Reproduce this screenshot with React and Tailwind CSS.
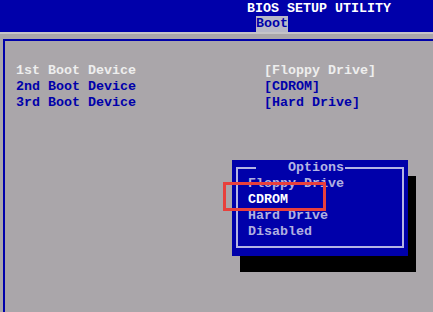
import React from "react";

const rows = [
  { label: "1st Boot Device", value: "[Floppy Drive]", active: true },
  { label: "2nd Boot Device", value: "[CDROM]" },
  { label: "3rd Boot Device", value: "[Hard Drive]" },
];

const options = ["Floppy Drive", "CDROM", "Hard Drive", "Disabled"];

const App = () => {
  return (
    <div
      className="relative w-[433px] h-[312px] overflow-hidden bg-[#aaa6aa] font-bold text-[13.33px] leading-[16px]"
      style={{ fontFamily: '"Liberation Mono", "DejaVu Sans Mono", monospace' }}
    >
      {/* header */}
      <div className="h-[32px] bg-[#0000aa] pl-[247px]">
        <div className="h-[16px] pt-[1px] text-white">BIOS SETUP UTILITY</div>
        <div className="h-[16px] pl-[9px]">
          <span className="inline-block bg-[#b8b8c8] text-[#0000aa] h-[16px]">Boot</span>
        </div>
      </div>
      <div className="h-[2px] bg-[#c6c4c8]" />

      {/* main frame */}
      <div className="ml-[3px] mt-[5px] h-[400px] border-l-2 border-t-2 border-[#0000aa] pt-[22px] pl-[11px]">
        {rows.map((r) => (
          <div
            key={r.label}
            className={`grid grid-cols-[248px_1fr] h-[16px] ${
              r.active ? "text-[#eeeeee]" : "text-[#0000aa]"
            }`}
          >
            <span>{r.label}</span>
            <span>{r.value}</span>
          </div>
        ))}
      </div>

      {/* options popup */}
      <div className="absolute left-[232px] top-[160px] w-[176px] h-[96px] bg-[#0000aa] shadow-[8px_16px_0_#000]">
        <div className="absolute left-[4px] right-[4px] top-[7px] bottom-[8px] border-2 border-[#b4b4e4]" />
        <div className="relative flex flex-col">
          <div className="h-[16px] pl-[24px]">
            <span className="inline-block h-[16px] bg-[#0000aa] pl-[32px] pr-[1px] text-[#b4b4e4]">
              Options
            </span>
          </div>
          {options.map((o) => (
            <div
              key={o}
              className={`h-[16px] pl-[16px] ${
                o === "CDROM" ? "text-white" : "text-[#b0b0e0]"
              }`}
            >
              {o}
            </div>
          ))}
        </div>
      </div>

      {/* red highlight annotation */}
      <div className="absolute left-[223px] top-[182px] w-[103px] h-[29px] border-[3px] border-[#e8403c]" />
    </div>
  );
};

export default App;
